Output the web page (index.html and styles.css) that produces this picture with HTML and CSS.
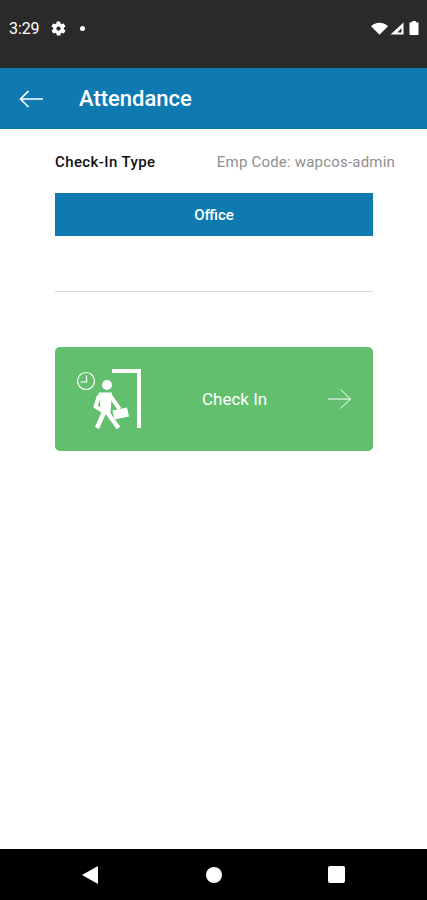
FILE: index.html
```html
<!DOCTYPE html>
<html lang="en">
<head>
    <meta charset="UTF-8">
    <meta name="viewport" content="width=device-width, initial-scale=1.0">
    <title>Attendance</title>
    <link rel="stylesheet" href="styles.css">
</head>
<body>
    <div class="status-bar">
        <span class="time">3:29</span>
        <svg class="gear" width="17" height="17" viewBox="0 0 24 24"><path fill="#fff" d="M19.4 13c.1-.3.1-.7.1-1s0-.7-.1-1l2.100-1.600c.2-.2.2-.4.1-.6l-2-3.500c-.1-.2-.4-.3-.6-.2l-2.500 1c-.5-.4-1.100-.7-1.700-1l-.4-2.600c0-.3-.2-.5-.5-.5h-4c-.3 0-.5.2-.5.400l-.4 2.700c-.6.2-1.100.6-1.700 1l-2.500-1c-.2-.1-.5 0-.6.2l-2 3.500c-.1.2-.1.5.1.600L4.600 11c0 .3-.1.700-.1 1s0 .7.1 1l-2.100 1.600c-.2.2-.2.4-.1.6l2 3.500c.1.200.4.3.6.200l2.500-1c.5.4 1.100.7 1.700 1l.4 2.600c0 .3.2.5.5.5h4c.3 0 .5-.2.5-.4l.4-2.700c.6-.2 1.100-.6 1.700-1l2.500 1c.2.1.5 0 .6-.2l2-3.500c.1-.2.1-.5-.1-.6L19.400 13zM12 15c-1.700 0-3-1.300-3-3s1.300-3 3-3 3 1.300 3 3-1.300 3-3 3z"/></svg>
        <span class="dot"></span>
        <span class="status-icons">
            <svg width="17" height="13" viewBox="0 0 17 13"><path fill="#fff" d="M0 4.200C2.200 2 5.200.8 8.500.8S14.800 2 17 4.200L8.500 12.800z"/></svg>
            <svg width="14" height="13" viewBox="0 0 14 13"><path fill="#fff" fill-rule="evenodd" d="M13.500.5v12H.5zM11.500 6L7.500 10.500h4z"/></svg>
            <svg class="battery" width="10" height="14" viewBox="0 0 10 14"><path fill="#fff" d="M3.200 0h3.600v1.300h1.700c.6 0 1 .4 1 1V13c0 .6-.4 1-1 1h-7c-.6 0-1-.4-1-1V2.300c0-.6.4-1 1-1h1.700z"/></svg>
        </span>
    </div>

    <header class="app-bar">
        <svg class="back" width="26" height="18" viewBox="0 0 26 18"><path fill="none" stroke="#fff" stroke-width="1.700" d="M25 9H2.500M10.500 1l-8 8 8 8"/></svg>
        <h1>Attendance</h1>
    </header>

    <main class="content">
        <div class="type-row">
            <span class="type-label">Check-In Type</span>
            <span class="emp-code">Emp Code: wapcos-admin</span>
        </div>
        <div class="type-value">Office</div>
        <hr class="divider">
        <div class="check-btn">
            <svg class="walker" width="70" height="64" viewBox="0 0 70 64">
                <circle cx="10" cy="14" r="8.500" fill="none" stroke="#fff" stroke-width="1.200"/>
                <path fill="none" stroke="#fff" stroke-width="1.200" d="M10.500 8.500V15H4.500"/>
                <path fill="none" stroke="#fff" stroke-width="4" d="M36 4H63V61"/>
                <circle cx="31" cy="18" r="5" fill="#fff"/>
                <path fill="#fff" stroke="#fff" stroke-width="2" stroke-linejoin="round" d="M23.500 26.500H35L33.500 46H26.500z"/>
                <path fill="none" stroke="#fff" stroke-width="4.500" d="M29 43L21 61M29.500 43L42.500 61"/>
                <path fill="none" stroke="#fff" stroke-width="4" stroke-linejoin="round" d="M34 28.500L43.500 42M23 28.500L19.500 39.500L27 44"/>
                <path fill="#fff" d="M36.500 43.500L51 40.500L53 49.500L38.500 52.500z"/>
            </svg>
            <span class="check-text">Check In</span>
            <svg class="arrow" width="25" height="22" viewBox="0 0 25 22"><path fill="none" stroke="#fff" stroke-width="1" d="M1 11h22.500M13.500 1.500l10 9.500-10 9.500"/></svg>
        </div>
    </main>

    <nav class="nav-bar">
        <svg width="18" height="20" viewBox="0 0 18 20"><path fill="#fff" d="M17 1v18L1 10z"/></svg>
        <span class="home"></span>
        <span class="recent"></span>
    </nav>
</body>
</html>
```

FILE: styles.css
```css
html, body {
    height: 100%;
}
body {
    margin: 0;
    display: flex;
    flex-direction: column;
    font-family: Roboto, "Liberation Sans", sans-serif;
    background-color: #fff;
    overflow: hidden;
}
.status-bar {
    height: 68px;
    flex: none;
    box-sizing: border-box;
    padding: 0 8px 12px 9px;
    display: flex;
    align-items: center;
    background-color: #2a2a2a;
    color: #fff;
}
.time {
    font-size: 16px;
    letter-spacing: -0.1px;
}
.gear {
    margin-left: 11px;
}
.dot {
    width: 5px;
    height: 5px;
    margin-left: 13px;
    border-radius: 50%;
    background-color: #fff;
}
.status-icons {
    margin-left: auto;
    display: flex;
    align-items: center;
    gap: 2px;
}
.battery {
    margin-left: 3px;
}
.app-bar {
    height: 61px;
    flex: none;
    box-sizing: border-box;
    padding-left: 18px;
    display: flex;
    align-items: center;
    background-color: #0f7ab2;
    color: #fff;
}
.app-bar h1 {
    margin: 0 0 0 35px;
    font-size: 22px;
    font-weight: 500;
}
.content {
    flex: 1;
    padding: 23px 32px 0 55px;
}
.type-row {
    height: 20px;
    display: flex;
    justify-content: space-between;
    align-items: center;
    font-size: 15px;
}
.type-label {
    font-weight: 500;
    letter-spacing: 0.4px;
    color: #111;
}
.emp-code {
    letter-spacing: 0.2px;
    color: #8f8f8f;
}
.type-value {
    width: 318px;
    height: 43px;
    margin-top: 21px;
    display: flex;
    justify-content: center;
    align-items: center;
    background-color: #0f7ab2;
    color: #fff;
    font-size: 15px;
    font-weight: 500;
}
.divider {
    width: 318px;
    height: 1px;
    margin: 55px 0 0;
    border: none;
    background-color: #d9d9d9;
}
.check-btn {
    width: 318px;
    height: 104px;
    margin-top: 55px;
    box-sizing: border-box;
    padding: 0 21px;
    display: flex;
    align-items: center;
    border-radius: 5px;
    background-color: #62bf6d;
    color: #fff;
}
.walker {
    flex: none;
}
.check-text {
    margin-left: 56px;
    font-size: 17px;
}
.arrow {
    margin-left: auto;
}
.nav-bar {
    height: 51px;
    flex: none;
    box-sizing: border-box;
    padding: 0 82px 0 81px;
    display: flex;
    justify-content: space-between;
    align-items: center;
    background-color: #000;
}
.home {
    width: 16px;
    height: 16px;
    border-radius: 50%;
    background-color: #fff;
}
.recent {
    width: 17px;
    height: 17px;
    border-radius: 2px;
    background-color: #fff;
}
```
